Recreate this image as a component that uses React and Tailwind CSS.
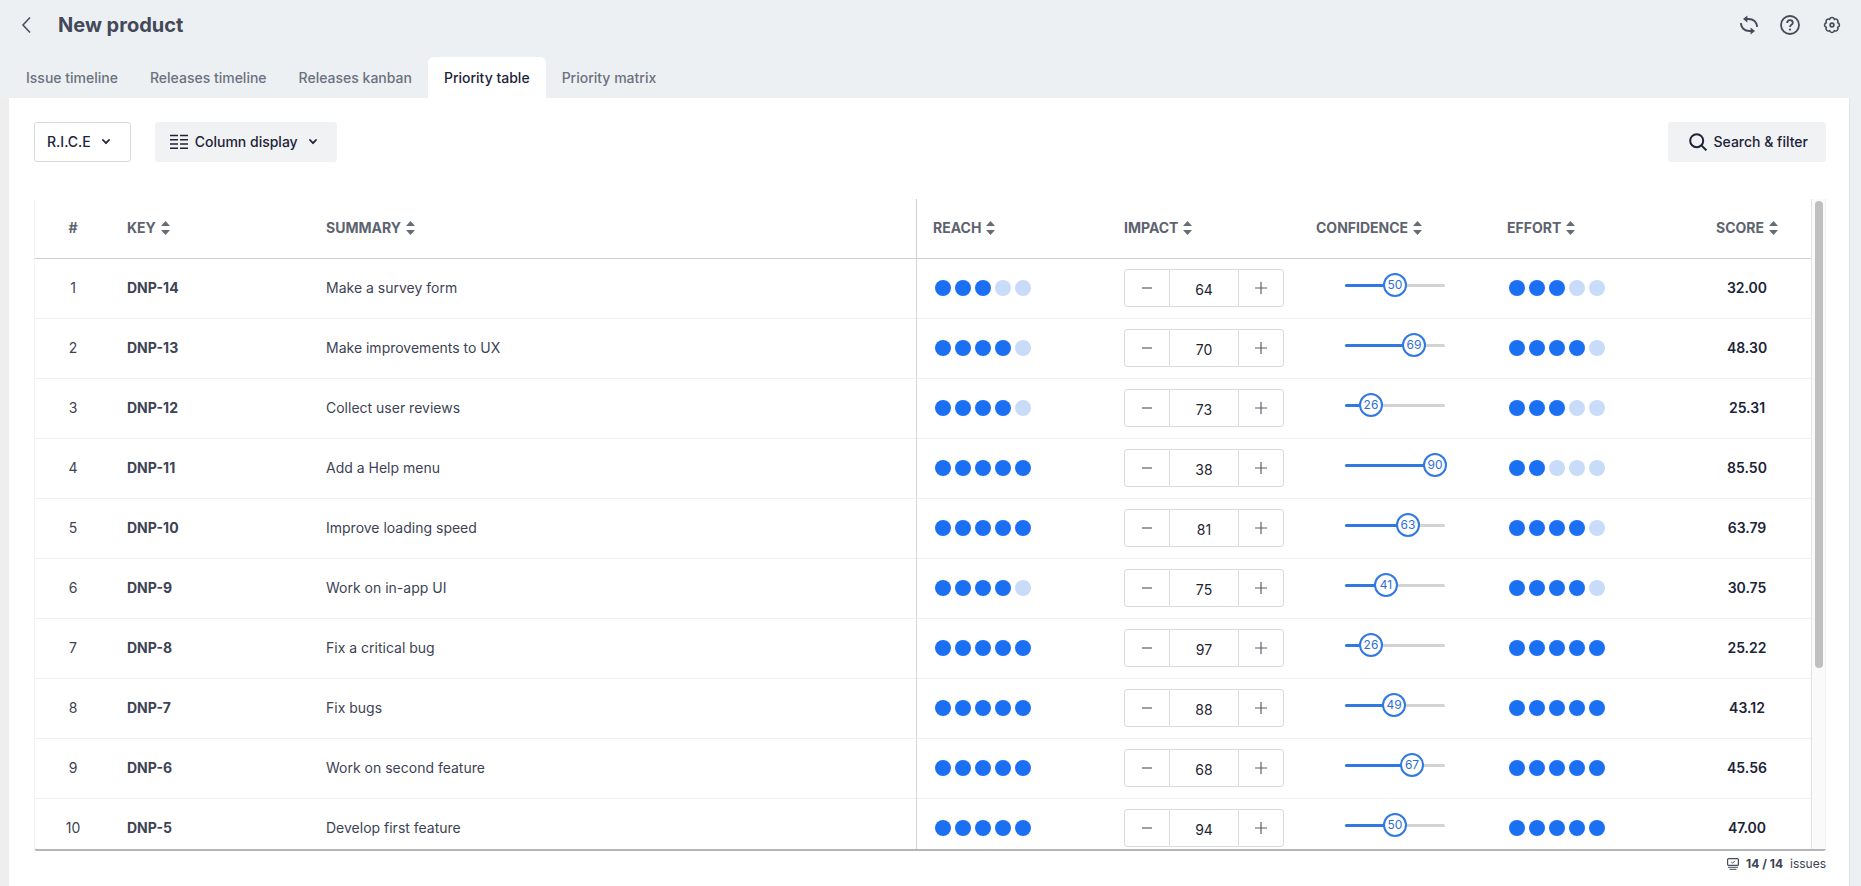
import { useState } from "react";

const TABS = ["Issue timeline", "Releases timeline", "Releases kanban", "Priority table", "Priority matrix"];

const ISSUES = [
  { key: "DNP-14", summary: "Make a survey form", reach: 3, impact: 64, confidence: 50, effort: 3, score: "32.00" },
  { key: "DNP-13", summary: "Make improvements to UX", reach: 4, impact: 70, confidence: 69, effort: 4, score: "48.30" },
  { key: "DNP-12", summary: "Collect user reviews", reach: 4, impact: 73, confidence: 26, effort: 3, score: "25.31" },
  { key: "DNP-11", summary: "Add a Help menu", reach: 5, impact: 38, confidence: 90, effort: 2, score: "85.50" },
  { key: "DNP-10", summary: "Improve loading speed", reach: 5, impact: 81, confidence: 63, effort: 4, score: "63.79" },
  { key: "DNP-9", summary: "Work on in-app UI", reach: 4, impact: 75, confidence: 41, effort: 4, score: "30.75" },
  { key: "DNP-8", summary: "Fix a critical bug", reach: 5, impact: 97, confidence: 26, effort: 5, score: "25.22" },
  { key: "DNP-7", summary: "Fix bugs", reach: 5, impact: 88, confidence: 49, effort: 5, score: "43.12" },
  { key: "DNP-6", summary: "Work on second feature", reach: 5, impact: 68, confidence: 67, effort: 5, score: "45.56" },
  { key: "DNP-5", summary: "Develop first feature", reach: 5, impact: 94, confidence: 50, effort: 5, score: "47.00" },
];

function BackIcon() {
  return (
    <svg width="18" height="18" viewBox="0 0 18 18" fill="none" stroke="#4a5060" strokeWidth="1.6">
      <path d="M12 1.5 5 9l7 7.5" />
    </svg>
  );
}

function SyncIcon() {
  return (
    <svg width="20" height="20" viewBox="0 0 20 20" fill="none" stroke="#454b58" strokeWidth="2">
      <path d="M5.500 4h4c4.800 0 8.200 3 8.700 7.800" />
      <path d="M14.500 16h-4c-4.800 0-8.200-3-8.700-7.800" />
      <path d="M8.400 .6v6.800L4 4zM11.600 12.600v6.800L16 16z" fill="#454b58" stroke="none" />
    </svg>
  );
}

function HelpIcon() {
  return (
    <svg width="20" height="20" viewBox="0 0 20 20" fill="none" stroke="#454b58" strokeWidth="1.8">
      <circle cx="10" cy="10" r="9" />
      <path d="M7.200 8c0-1.700 1.200-2.800 2.800-2.800s2.800 1 2.800 2.500c0 2-2.800 2.200-2.800 4.300" />
      <circle cx="10" cy="14.600" r="1.100" fill="#454b58" stroke="none" />
    </svg>
  );
}

function GearIcon() {
  return (
    <svg width="18" height="18" viewBox="-9 -9 18 18" fill="none" stroke="#454b58" strokeWidth="1.600" strokeLinejoin="round">
      <path d="M-2.330-5.630a2.400 2.400 0 0 1 4.660 0a2.400 2.400 0 0 1 3.300 3.300a2.400 2.400 0 0 1 0 4.660a2.400 2.400 0 0 1-3.300 3.300a2.400 2.400 0 0 1-4.660 0a2.400 2.400 0 0 1-3.300-3.300a2.400 2.400 0 0 1 0-4.660a2.400 2.400 0 0 1 3.300-3.300z" />
      <circle r="1.900" />
    </svg>
  );
}

function ColumnsIcon() {
  return (
    <svg width="18" height="16" viewBox="0 0 18 16" stroke="#1d2438" strokeWidth="1.5">
      <path d="M0 1.500h8M10 1.500h8M0 5.700h8M10 5.700h8M0 10h8M10 10h8M0 14.200h8M10 14.200h8" />
    </svg>
  );
}

function SearchIcon() {
  return (
    <svg width="18" height="18" viewBox="0 0 18 18" fill="none" stroke="#1d2438" strokeWidth="2">
      <circle cx="7.700" cy="7.700" r="6.500" />
      <path d="m12.400 12.400 5 5" />
    </svg>
  );
}

function ChevronIcon() {
  return (
    <svg width="8" height="6" viewBox="0 0 8 6" fill="none" stroke="#1d2438" strokeWidth="1.800" strokeLinecap="round" strokeLinejoin="round">
      <path d="m1 1 3 3.200L7 1" />
    </svg>
  );
}

function SortIcon() {
  return (
    <svg width="9" height="14" viewBox="0 0 9 14" fill="#666c77">
      <path d="M4.500 0 9 5H0zM4.500 14 0 9h9z" />
    </svg>
  );
}

function IssuesIcon() {
  return (
    <svg width="12" height="12" viewBox="0 0 12 12" fill="none" stroke="#454b58">
      <rect x=".6" y=".6" width="10.800" height="6.800" rx="1" strokeWidth="1.200" />
      <path d="m4.300 4 1.200 1.200L7.900 2.800" />
      <path d="M1 9.300h10M2.500 11.300h7" />
    </svg>
  );
}

function SortHeader({ label }) {
  return (
    <button type="button" className="inline-flex items-center gap-[5px] align-middle">
      {label}
      <SortIcon />
    </button>
  );
}

function Rating({ name, label, value, onChange }) {
  return (
    <div role="radiogroup" aria-label={label} className="flex gap-1 pl-[2px]">
      {[1, 2, 3, 4, 5].map((n) => (
        <input
          key={n}
          type="radio"
          name={name}
          aria-label={`${label} ${n}`}
          checked={n === value}
          onChange={() => onChange(n)}
          className={
            n <= value
              ? "size-4 appearance-none rounded-full bg-[#1b6ff2]"
              : "size-4 appearance-none rounded-full bg-[#c8dbf8]"
          }
        />
      ))}
    </div>
  );
}

function Stepper({ label, value, onChange }) {
  return (
    <div className="flex h-[38px] w-[160px] rounded-[3px] border border-[#d9dadd]">
      <button type="button" aria-label={`Decrease ${label}`} onClick={() => onChange(value - 1)} className="grid w-[44px] place-items-center">
        <svg width="12" height="12" viewBox="0 0 12 12" stroke="#5b5f67" strokeWidth="1.200">
          <path d="M1 6h10" />
        </svg>
      </button>
      <input
        type="text"
        aria-label={label}
        value={value}
        onChange={(e) => onChange(Number(e.target.value) || 0)}
        className="min-w-0 flex-1 border-x border-[#d9dadd] pt-1 text-center text-[#1f2430] outline-none"
      />
      <button type="button" aria-label={`Increase ${label}`} onClick={() => onChange(value + 1)} className="grid w-[44px] place-items-center">
        <svg width="12" height="12" viewBox="0 0 12 12" stroke="#5b5f67" strokeWidth="1.200">
          <path d="M0 6h12M6 0v12" />
        </svg>
      </button>
    </div>
  );
}

function Slider({ label, value, onChange }) {
  return (
    <div className="relative mb-[6px] ml-[29px] h-6 w-[100px]">
      <div className="absolute inset-x-0 top-[11px] h-[3px] rounded-full bg-[#d3d3d3]">
        <div className="h-full rounded-full bg-[#2f79e0]" style={{ width: `${value}%` }} />
      </div>
      <input
        type="range"
        aria-label={label}
        min="0"
        max="100"
        value={value}
        onChange={(e) => onChange(Number(e.target.value))}
        className="absolute top-0 -left-3 h-6 w-[124px] appearance-none bg-transparent [&::-webkit-slider-thumb]:size-6 [&::-webkit-slider-thumb]:appearance-none [&::-webkit-slider-thumb]:rounded-full [&::-webkit-slider-thumb]:border-2 [&::-webkit-slider-thumb]:border-[#2f79e0] [&::-webkit-slider-thumb]:bg-white"
      />
      <span
        className="pointer-events-none absolute top-0 w-6 -translate-x-1/2 text-center text-xs leading-6 text-[#2f6fd0]"
        style={{ left: `${value}%` }}
      >
        {value}
      </span>
    </div>
  );
}

function App() {
  const [tab, setTab] = useState("Priority table");
  const [issues, setIssues] = useState(ISSUES);

  function update(key, field, value) {
    setIssues(issues.map((issue) => (issue.key === key ? { ...issue, [field]: value } : issue)));
  }

  return (
    <div className="flex h-screen min-w-[1200px] flex-col bg-[#ecf0f3] font-['Inter',sans-serif] text-sm text-[#3d4354]">
      <header className="flex h-[57px] items-start justify-between pt-[9px] pr-5 pl-[18px]">
        <div className="flex h-8 items-center gap-[22px]">
          <button type="button" aria-label="Back">
            <BackIcon />
          </button>
          <h1 className="text-xl font-bold text-[#434959]">New product</h1>
        </div>
        <div className="flex h-8 items-center gap-[21px]">
          <button type="button" aria-label="Sync"><SyncIcon /></button>
          <button type="button" aria-label="Help"><HelpIcon /></button>
          <button type="button" aria-label="Settings" className="ml-[2px]"><GearIcon /></button>
        </div>
      </header>

      <nav className="flex h-[41px] pl-[10px] font-medium">
        {TABS.map((name) => (
          <button
            key={name}
            type="button"
            onClick={() => setTab(name)}
            className={
              name === tab
                ? "rounded-t-md bg-white px-4 text-[#1d2438]"
                : "px-4 text-[#6b717e]"
            }
          >
            {name}
          </button>
        ))}
      </nav>

      <main className="mr-[11px] flex min-h-0 flex-1 flex-col border-r border-l-[9px] border-r-[#e2e4e7] border-l-[#eeeeef] bg-white pr-[23px] pl-[25px]">
        <div className="flex items-center pt-6 font-medium text-[#1d2438]">
          <button type="button" className="flex h-10 items-center gap-[11px] rounded-[3px] border border-[#d9dadd] pr-5 pl-3">
            R.I.C.E
            <ChevronIcon />
          </button>
          <button type="button" className="ml-6 flex h-10 items-center rounded-[3px] bg-[#f0f2f4] pr-5 pl-[15px]">
            <ColumnsIcon />
            <span className="mr-[11px] ml-[7px]">Column display</span>
            <ChevronIcon />
          </button>
          <button type="button" className="ml-auto flex h-10 items-center gap-[7px] rounded-[3px] bg-[#f0f2f4] pr-[18px] pl-[21px]">
            <SearchIcon />
            Search &amp; filter
          </button>
        </div>

        <section className="mt-[37px] flex min-h-0 flex-1 rounded-b-[3px] border-b-2 border-l border-b-[#b3b5b8] border-l-[#f3f3f4]">
          <div className="min-w-0 flex-1 overflow-hidden">
            <table className="w-full table-fixed border-separate border-spacing-0">
              <thead>
                <tr className="h-[60px] text-left text-[#5d636f] [&>th]:border-b [&>th]:border-[#cfd1d4] [&>th]:px-4 [&>th]:pb-[2px] [&>th]:font-bold">
                  <th className="w-[76px] text-center">#</th>
                  <th className="w-[199px]"><SortHeader label="KEY" /></th>
                  <th className="border-r"><SortHeader label="SUMMARY" /></th>
                  <th className="w-[191px]"><SortHeader label="REACH" /></th>
                  <th className="w-[192px]"><SortHeader label="IMPACT" /></th>
                  <th className="w-[191px]"><SortHeader label="CONFIDENCE" /></th>
                  <th className="w-[192px]"><SortHeader label="EFFORT" /></th>
                  <th className="w-[128px] text-center">
                    <SortHeader label="SCORE" />
                  </th>
                </tr>
              </thead>
              <tbody>
                {issues.map((issue, i) => (
                  <tr key={issue.key} className="h-[60px] [&>td]:border-b [&>td]:border-b-[#eff0f1] [&>td]:px-4 [&>td]:pb-[2px]">
                    <td className="text-center">{i + 1}</td>
                    <td className="font-bold">{issue.key}</td>
                    <td className="border-r border-r-[#d3d5d8]">{issue.summary}</td>
                    <td>
                      <Rating name={`reach-${issue.key}`} label={`Reach of ${issue.key}`} value={issue.reach} onChange={(v) => update(issue.key, "reach", v)} />
                    </td>
                    <td>
                      <Stepper label={`Impact of ${issue.key}`} value={issue.impact} onChange={(v) => update(issue.key, "impact", v)} />
                    </td>
                    <td>
                      <Slider label={`Confidence of ${issue.key}`} value={issue.confidence} onChange={(v) => update(issue.key, "confidence", v)} />
                    </td>
                    <td>
                      <Rating name={`effort-${issue.key}`} label={`Effort of ${issue.key}`} value={issue.effort} onChange={(v) => update(issue.key, "effort", v)} />
                    </td>
                    <td className="text-center font-semibold text-[#1d2438]">{issue.score}</td>
                  </tr>
                ))}
              </tbody>
            </table>
          </div>
          <div className="w-[15px] border-x border-l-[#e2e3e5] border-r-[#efefef] bg-[#fafafa] px-[3px] pt-[2px]">
            <div className="h-[72%] w-2 rounded-full bg-[#bfbfbf]" />
          </div>
        </section>

        <footer className="flex h-[35px] items-start justify-end gap-[7px] pt-[5px] text-xs">
          <span className="pt-[2px]"><IssuesIcon /></span>
          <b className="font-bold">14 / 14</b>
          <span>issues</span>
        </footer>
      </main>
    </div>
  );
}

export default App;
